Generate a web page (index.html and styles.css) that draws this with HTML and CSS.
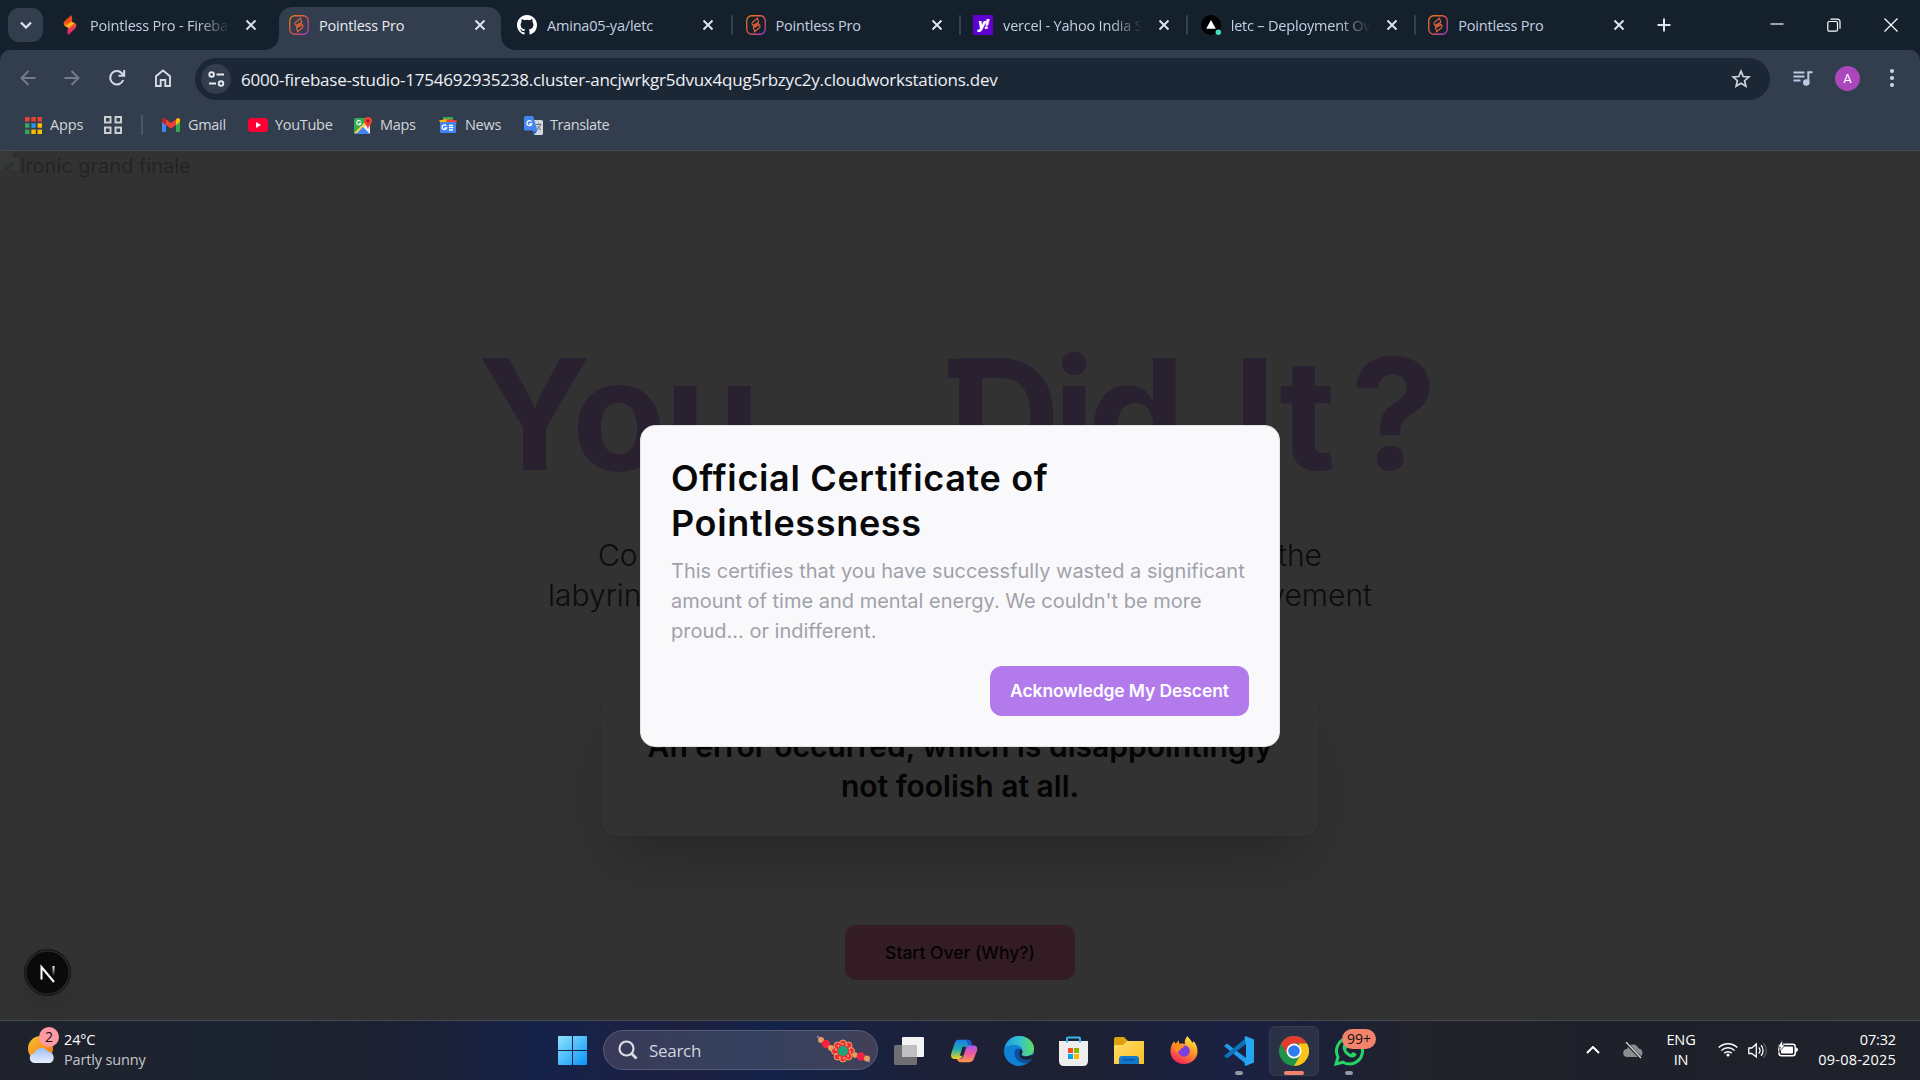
FILE: index.html
```html
<!DOCTYPE html>
<html lang="en">
<head>
<meta charset="utf-8">
<title>Pointless Pro</title>
<link rel="stylesheet" href="styles.css">
</head>
<body>
<svg class="defs" width="0" height="0">
  <defs>
    <linearGradient id="ring" x1="0" y1="0" x2="1" y2="1"><stop offset="0" stop-color="#e8820c"/><stop offset=".5" stop-color="#e2504a"/><stop offset="1" stop-color="#a63cc0"/></linearGradient>
    <linearGradient id="flame" x1="0" y1="0" x2="0" y2="1"><stop offset="0" stop-color="#e8400f"/><stop offset=".6" stop-color="#f4511e"/><stop offset="1" stop-color="#ffb01a"/></linearGradient>
    <linearGradient id="flame2" x1="0" y1="0" x2="0" y2="1"><stop offset="0" stop-color="#ffb01a"/><stop offset=".3" stop-color="#f0443a"/><stop offset="1" stop-color="#e5189a"/></linearGradient>
    <linearGradient id="win" x1="0" y1="0" x2="1" y2="1"><stop offset="0" stop-color="#8fe3ff"/><stop offset="1" stop-color="#0a93f5"/></linearGradient>
    <linearGradient id="edgeA" x1="0" y1="0" x2="1" y2="0"><stop offset="0" stop-color="#1b9de2"/><stop offset=".5" stop-color="#35c1cf"/><stop offset="1" stop-color="#62dc5b"/></linearGradient>
    <linearGradient id="copA" x1="0" y1="0" x2="0" y2="1"><stop offset="0" stop-color="#1d7be8"/><stop offset=".5" stop-color="#1fb0b0"/><stop offset="1" stop-color="#f3d21c"/></linearGradient>
    <linearGradient id="copB" x1="0" y1="0" x2="0" y2="1"><stop offset="0" stop-color="#a955f0"/><stop offset=".5" stop-color="#ee5a9c"/><stop offset="1" stop-color="#ff9a4a"/></linearGradient>
    <linearGradient id="folder" x1="0" y1="0" x2="1" y2="1"><stop offset="0" stop-color="#ffdd6b"/><stop offset="1" stop-color="#fbbf24"/></linearGradient>
    <linearGradient id="fox" x1=".8" y1="0" x2=".3" y2="1"><stop offset="0" stop-color="#fff04a"/><stop offset=".45" stop-color="#ff9a22"/><stop offset="1" stop-color="#f5205e"/></linearGradient>
    <linearGradient id="sun" x1="0" y1="0" x2="1" y2="1"><stop offset="0" stop-color="#fbc331"/><stop offset="1" stop-color="#f06d10"/></linearGradient>
    <linearGradient id="cloud" x1="0" y1="0" x2="0" y2="1"><stop offset="0" stop-color="#9dbef5"/><stop offset="1" stop-color="#e6effe"/></linearGradient>
    <linearGradient id="nfade" x1="0" y1="0" x2="0" y2="1"><stop offset="0" stop-color="#fff"/><stop offset="1" stop-color="#fff" stop-opacity="0"/></linearGradient>
    <symbol id="x" viewBox="0 0 12 12"><path d="M1.5 1.5l9 9M10.5 1.5l-9 9" stroke="currentColor" stroke-width="1.9" fill="none"/></symbol>
    <symbol id="studio" viewBox="0 0 20 20"><rect x=".75" y=".75" width="18.5" height="18.5" rx="5" fill="none" stroke="url(#ring)" stroke-width="1.3"/><path d="M11.5 3.2L6.6 7.2c-1 .9-.7 2.3.3 3l1.6 1.1 3.5-3c1-1 .7-2.300-.1-3.500zM8.500 16.800l4.900-4c1-.9.8-2.200-.2-3l-1.500-1.100-3.700 3c-1 1-.6 2.500.5 3.400zM7 10.200l5-2.400M8 12.500l5-2.600" fill="none" stroke="#e2603a" stroke-width="1.100"/></symbol>
  </defs>
</svg>

<header class="chrome">
  <div class="tabs">
    <div class="tabs-menu"><svg width="12" height="8" viewBox="0 0 12 8"><path d="M1 1.500l5 5 5-5" fill="none" stroke="#dfe5ee" stroke-width="2.200"/></svg></div>
    <div class="tab tab-first"><svg class="fav" viewBox="0 0 20 20"><path d="M11.300 0L5 5.800C2.800 8 3.500 10.500 5.700 11.400l3.500 1.600 1.600-4.500C12.700 6 12.700 3 11.300 0z" fill="url(#flame)"/><path d="M8.200 20l6.500-6c2.600-2.400 1.900-5-.3-5.900L11 6.800 9.500 11.500C7 14 6.800 17 8.200 20z" fill="url(#flame2)"/><path d="M5.700 11.400L11 6.800l3.400 1.300-5.200 4.900z" fill="#ffb51a"/></svg><span class="tab-title">Pointless Pro - Firebase</span><svg class="tab-close"><use href="#x"/></svg></div>
    <div class="tab tab-active"><svg class="fav"><use href="#studio"/></svg><span class="tab-title">Pointless Pro</span><svg class="tab-close"><use href="#x"/></svg></div>
    <div class="tab"><svg class="fav" viewBox="0 0 16 16"><path fill="#fff" d="M8 0C3.580 0 0 3.580 0 8c0 3.540 2.290 6.530 5.470 7.590.4.070.55-.17.55-.38v-1.490c-2.230.48-2.690-.94-2.690-.94-.36-.93-.89-1.170-.89-1.170-.73-.5.050-.49.050-.49.800.060 1.230.83 1.230.83.72 1.220 1.870.87 2.330.66.070-.52.280-.87.5-1.070-1.780-.2-3.640-.89-3.640-3.950 0-.87.310-1.590.82-2.150-.08-.2-.36-1.020.080-2.120 0 0 .67-.21 2.200.82a7.600 7.600 0 0 1 4 0c1.530-1.040 2.200-.82 2.200-.82.440 1.100.160 1.920.080 2.120.51.560.82 1.270.82 2.150 0 3.070-1.870 3.750-3.650 3.950.29.250.54.730.54 1.480v2.200c0 .21.150.46.550.38A8 8 0 0 0 16 8c0-4.420-3.580-8-8-8z"/></svg><span class="tab-title">Amina05-ya/letc</span><svg class="tab-close"><use href="#x"/></svg></div>
    <div class="tab tab-sep"><svg class="fav"><use href="#studio"/></svg><span class="tab-title">Pointless Pro</span><svg class="tab-close"><use href="#x"/></svg></div>
    <div class="tab tab-sep"><span class="fav yahoo">y!</span><span class="tab-title fade">vercel - Yahoo India Search</span><svg class="tab-close"><use href="#x"/></svg></div>
    <div class="tab tab-sep"><svg class="fav" viewBox="0 0 20 20"><circle cx="10" cy="10" r="10"/><path d="M10 5l4.800 8.800H5.200z" fill="#fff"/><circle cx="17.300" cy="17.300" r="2.700" fill="#45dec4"/></svg><span class="tab-title fade">letc – Deployment Overview</span><svg class="tab-close"><use href="#x"/></svg></div>
    <div class="tab tab-sep"><svg class="fav"><use href="#studio"/></svg><span class="tab-title">Pointless Pro</span><svg class="tab-close"><use href="#x"/></svg></div>
    <div class="new-tab"><svg width="14" height="14" viewBox="0 0 14 14"><path d="M7 .5v13M.5 7h13" stroke="#dbe3ef" stroke-width="2"/></svg></div>
    <div class="window-buttons">
      <svg width="14" height="14" viewBox="0 0 14 14"><path d="M.5 6h13" stroke="#fff" stroke-width="1.200"/></svg>
      <svg width="14" height="14" viewBox="0 0 14 14" fill="none" stroke="#fff" stroke-width="1.200"><rect x=".8" y="3.500" width="9.700" height="9.700" rx="1.500"/><path d="M3.500 1.200h7a2.500 2.500 0 0 1 2.500 2.500v7"/></svg>
      <svg width="14" height="14" viewBox="0 0 14 14"><path d="M.5.5l13 13M13.500.5l-13 13" stroke="#fff" stroke-width="1.200"/></svg>
    </div>
  </div>
  <div class="toolbar">
    <div class="nav">
      <svg width="16" height="16" viewBox="0 0 16 16" stroke="#727c8a" fill="none" stroke-width="1.900"><path d="M15.500 8H2M8.500 1L1.500 8l7 7"/></svg>
      <svg width="16" height="16" viewBox="0 0 16 16" stroke="#727c8a" fill="none" stroke-width="1.900"><path d="M.5 8H14M7.500 1l7 7-7 7"/></svg>
      <svg width="18" height="18" viewBox="0 0 18 18" stroke="#d3dbe6" fill="none" stroke-width="2"><path d="M15.200 11a6.700 6.700 0 1 1-1.400-6.800L16 6.500M16.200 1v5.700h-5.700"/></svg>
      <svg width="18" height="18" viewBox="0 0 18 18" stroke="#d3dbe6" fill="none" stroke-width="1.900"><path d="M2 7.200L9 1.500l7 5.700V17h-4.700v-6H6.700v6H2z"/></svg>
    </div>
    <div class="omnibox">
      <div class="site-info"><svg width="17" height="16" viewBox="0 0 17 16" fill="none" stroke="#e6eaf0" stroke-width="1.900"><circle cx="3.600" cy="3.500" r="2.300"/><path d="M8.500 3.500H16M1 12.500h7"/><circle cx="13" cy="12.500" r="2.300"/></svg></div>
      <span class="url">6000-firebase-studio-1754692935238.cluster-ancjwrkgr5dvux4qug5rbzyc2y.cloudworkstations.dev</span>
      <svg class="star" width="20" height="20" viewBox="0 0 20 20"><path d="M10 2.200l2.200 5.300 5.700.5-4.300 3.700 1.300 5.600-4.900-3-4.900 3 1.300-5.600L2.100 8l5.700-.5z" fill="none" stroke="#d0d3d9" stroke-width="1.700"/></svg>
    </div>
    <div class="tools">
      <svg width="20" height="16" viewBox="0 0 20 16" fill="none" stroke="#bccbe3" stroke-width="2"><path d="M.5 2.500h11M.5 6.500h11M.5 10.500h7M15.300 12V2.200h4.200"/><circle cx="13.300" cy="12.500" r="2.300" fill="#bccbe3"/></svg>
      <span class="avatar">A</span>
      <svg width="6" height="20" viewBox="0 0 6 20" fill="#c7d4ea"><circle cx="3" cy="3" r="2.100"/><circle cx="3" cy="10" r="2.100"/><circle cx="3" cy="17" r="2.100"/></svg>
    </div>
  </div>
  <nav class="bookmarks">
    <span class="bm bm-apps"><svg width="17" height="17" viewBox="0 0 17 17"><path d="M0 0h4.500v4.500H0zM6.300 0h4.500v4.500H6.300zM12.500 0H17v4.500h-4.500z" fill="#ea4335"/><path d="M0 6.300h4.500v4.500H0zM0 12.500h4.500V17H0z" fill="#34a853"/><path d="M6.300 6.300h4.500v4.500H6.300z" fill="#2a94f4"/><path d="M12.500 6.300H17v4.500h-4.500zM6.300 12.500h4.500V17H6.300zM12.500 12.500H17V17h-4.500z" fill="#fbbc04"/></svg><span>Apps</span></span>
    <svg class="grid-icon" width="18" height="18" viewBox="0 0 18 18" fill="none" stroke="#ccced2" stroke-width="2"><path d="M1 1h5.500v5.500H1zM11.500 1H17v5.500h-5.500zM1 11.500h5.500V17H1zM11.500 11.500H17V17h-5.500z"/></svg>
    <i class="divider"></i>
    <span class="bm bm-gmail"><svg width="18" height="14" viewBox="0 0 18 14"><path d="M0 2v10.500Q0 14 1.500 14H4V5.500z" fill="#4285f4"/><path d="M18 2v10.500q0 1.500-1.500 1.500H14V5.500z" fill="#34a853"/><path d="M14 1.200L15.500.2C16.800-.5 18 .6 18 2v2l-4 3z" fill="#fbbc04"/><path d="M4 1.200L2.500.2C1.200-.5 0 .6 0 2v2l4 3z" fill="#c5221f"/><path d="M4 1.200V7l5 3.600L14 7V1.200L9 5z" fill="#ea4335"/></svg><span>Gmail</span></span>
    <span class="bm bm-yt"><svg width="20" height="14" viewBox="0 0 20 14"><rect width="20" height="14" rx="3.500" fill="#f03"/><path d="M8 4l5 3-5 3z" fill="#fff"/></svg><span>YouTube</span></span>
    <span class="bm bm-maps"><svg width="18" height="19" viewBox="0 0 18 19"><rect y="2" width="16" height="16" rx="1.500" fill="#34a853"/><path d="M0 17L15 2l1 1v14z" fill="#fbcf3d"/><path d="M2 18L16 5v13z" fill="#e8eaed"/><path d="M2 18l7-7 7 7z" fill="#4285f4"/><path d="M14 13c-.5-3-4-5-4-8a4 4 0 0 1 8 0c0 3-3.500 5-4 8z" fill="#ea4335"/><circle cx="14" cy="5" r="1.400" fill="#8c1a10"/><path d="M6.800 5.500A2.200 2.200 0 1 0 7 7.300H5" stroke="#fff" stroke-width="1.100" fill="none"/></svg><span>Maps</span></span>
    <span class="bm bm-news"><svg width="18" height="16" viewBox="0 0 18 16"><path d="M4 0h10v6H4z" fill="#34a853"/><path d="M0 3.500l10-2 1 5H2z" fill="#fbbc04"/><path d="M8 2l10 1.500-1 4H7z" fill="#ea4335"/><path d="M1 6.200Q1 5 2.200 5h13.600Q17 5 17 6.200V15q0 1-1 1H2q-1 0-1-1z" fill="#4285f4"/><path d="M7.300 8.800A2.300 2.300 0 1 0 7.600 11H5.500M10 8.500h4M10 10.700h4.500M10 13h4" stroke="#fff" stroke-width="1.300" fill="none"/></svg><span>News</span></span>
    <span class="bm bm-tr"><svg width="19" height="19" viewBox="0 0 19 19"><path d="M7 4h10.500q1.500 0 1.500 1.500v12q0 1.500-1.500 1.500H10z" fill="#d3d6da"/><path d="M0 1.500Q0 0 1.500 0H9l4.500 14.500H1.500Q0 14.500 0 13z" fill="#4285f4"/><path d="M10 19l3.500-4.500H9z" fill="#1967d2"/><path d="M7.500 5.800A2.500 2.500 0 1 0 7.800 8H5.200" stroke="#fff" stroke-width="1.300" fill="none"/><path d="M12 8.500h5.500M14.800 7v1.500M16.500 8.500c-.5 2.500-2 4-3.500 5M13.500 10c.8 1.800 2 3 3.500 4" stroke="#66727f" fill="none"/></svg><span>Translate</span></span>
  </nav>
</header>

<main class="page">
  <div class="broken"><svg width="20" height="20" viewBox="0 0 20 20"><path d="M0 0h13l6 6v13H0z" fill="#383838"/><path d="M13 0v6h6z" fill="#2d2d2d"/><path d="M3 19L12 10l4 2-7 7z" fill="#29352b"/></svg><span>Ironic grand finale</span></div>
  <h1 class="headline"><span class="w-you">You...</span><span class="w-did">Did</span><span class="w-it">I<span class="w-t">t</span>?</span></h1>
  <div class="sub">
    <p class="sub-1"><span>Co</span><span>the</span></p>
    <p class="sub-2"><span>labyrin</span><span>vement</span></p>
  </div>
  <section class="card">An error occurred, which is disappointingly<br>not foolish at all.</section>
  <button class="restart">Start Over (Why?)</button>
  <div class="next-badge"><svg width="20" height="20" viewBox="0 0 20 20" fill="none"><path d="M3.500 16.500V4L16 19" stroke="#fff" stroke-width="2"/><path d="M14.500 3h2v10h-2z" fill="url(#nfade)"/></svg></div>
  <div class="dialog" role="dialog">
    <h2>Official Certificate of<br>Pointlessness</h2>
    <p>This certifies that you have successfully wasted a significant<br>amount of time and mental energy. We couldn't be more<br>proud... or indifferent.</p>
    <div class="actions"><button class="ack">Acknowledge My Descent</button></div>
  </div>
</main>

<footer class="taskbar">
  <div class="weather">
    <div class="weather-icon"><svg width="28" height="28" viewBox="0 0 28 28"><circle cx="12.500" cy="12.500" r="12.500" fill="url(#sun)"/><path d="M7 27a5 5 0 0 1-.5-10A7.500 7.500 0 0 1 20 15.500 6 6 0 0 1 22 27z" fill="url(#cloud)"/></svg><span class="weather-badge">2</span></div>
    <div class="weather-text"><span>24°C</span><span class="dim">Partly sunny</span></div>
  </div>
  <div class="dock">
    <div class="slot slot-win"><svg width="29" height="29" viewBox="0 0 29 29"><path d="M1 0h13v14H0V1q0-1 1-1zM15 0h13q1 0 1 1v13H15zM0 15h14v14H1q-1 0-1-1zM15 15h14v13q0 1-1 1H15z" fill="url(#win)"/></svg></div>
    <div class="search"><svg width="20" height="20" viewBox="0 0 20 20" fill="none" stroke="#dadde6"><circle cx="8.500" cy="8.500" r="7" stroke-width="2.200"/><path d="M13.500 13.500l5 5" stroke-width="2.800"/></svg><span>Search</span>
      <svg class="rakhi" width="56" height="30" viewBox="0 0 56 30"><path d="M1 1l15 12M40 19l14 8" stroke="#8b6cc8" stroke-width="2"/><circle cx="5" cy="5" r="3" fill="#e3a061"/><circle cx="10" cy="9" r="4.200" fill="#ee2445"/><circle cx="15" cy="13" r="3" fill="#e3a061"/><circle cx="39" cy="20" r="2.800" fill="#e3a061"/><circle cx="45" cy="21.500" r="4.200" fill="#ee2445"/><circle cx="51" cy="23.500" r="3" fill="#e3a061"/><g fill="#e8303f" stroke="#f0a35b" stroke-width="1"><circle cx="27" cy="8.500" r="3.500"/><circle cx="32.500" cy="10.500" r="3.500"/><circle cx="35" cy="16" r="3.500"/><circle cx="32.500" cy="21.500" r="3.500"/><circle cx="27" cy="23.500" r="3.500"/><circle cx="21.500" cy="21.500" r="3.500"/><circle cx="19" cy="16" r="3.500"/><circle cx="21.500" cy="10.500" r="3.500"/></g><circle cx="27" cy="16" r="7.500" fill="#e8303f"/><circle cx="27" cy="16" r="7" fill="none" stroke="#ffc95a" stroke-width="1.500" stroke-dasharray="1.500 3"/><circle cx="27" cy="16" r="5" fill="#1da67a"/></svg>
    </div>
    <div class="slot slot-tv"><svg width="30" height="28" viewBox="0 0 30 28"><rect y="8" width="23" height="20" rx="1.500" fill="#6f6f73"/><rect x="8" width="22" height="20" rx="1" fill="#f3f3f3"/><path d="M8 8h15v12H8z" fill="#bfbfc1"/></svg></div>
    <div class="slot slot-copilot"><svg width="28" height="26" viewBox="0 0 30 28"><path d="M9 2h10c2.500 0 3.300 1.500 4 3.500L24 9h-4c-2.500 0-3.500 1.500-4.500 4l-2 6c-1 2.500-2 3.500-4.500 3.500H4.500C1 22.500.5 19.500 1.500 16L5 5.500C5.800 3.200 7 2 9 2z" fill="url(#copA)"/><path d="M21 26H11.500c-2.500 0-3.500-1.500-4.200-3.500h3c2.500 0 3.500-1.500 4.300-4l2-6c1-2.700 2-4.500 4.500-4.500h4.500c3.500 0 4.300 2.500 3.300 6l-3.500 9C24.500 25 23 26 21 26z" fill="url(#copB)"/><path d="M17 2h3c2 0 3 2 4 6h-4z" fill="#2257c8"/><path d="M13.500 9.500h3.500l-3.500 9.500h-3z" fill="#1e2035"/></svg></div>
    <div class="slot"><svg width="30" height="30" viewBox="0 0 30 30"><circle cx="15" cy="15" r="15" fill="#0f82d8"/><path d="M1 11C3 4 9 0 15 0c9 0 15 6 15 12.500 0 5-3.500 7.500-8 7.500-3 0-5-1-4.500-2.500C20 14 17 9 11 9 6 9 2 11 1 11z" fill="url(#edgeA)"/><path d="M11 14c-2 7 3 14 12 13.500 2-1 4-3 5-5-5 3-12 1-12-3.500 0-2 .5-3 1.500-4.500-1.500-2-5.500-2.500-6.500-.5z" fill="#0c4f9e"/><path d="M16 13c2.500.5 3.500 3 1.500 5.500.5 1.500 3 2.500 6.500 1.500l6-1.500v3l-2 1c-6 3-12.500 1-12.500-4 0-2 .3-3.500.5-5.500z" fill="#1d2033"/></svg></div>
    <div class="slot slot-store"><svg width="29" height="30" viewBox="0 0 29 30"><path d="M0 5h29v20q0 5-5 5H5q-5 0-5-5z" fill="#eeeeef"/><path d="M8 6.500V2.500q0-1 1-1h11q1 0 1 1v4" fill="none" stroke="#35b8ee" stroke-width="2"/><path d="M9 12h5v5H9z" fill="#f25022"/><path d="M15 12h5v5h-5z" fill="#7fba00"/><path d="M9 18h5v5H9z" fill="#00a4ef"/><path d="M15 18h5v5h-5z" fill="#ffb900"/></svg></div>
    <div class="slot"><svg width="30" height="28" viewBox="0 0 30 28"><path d="M0 2q0-2 2-2h8l4 4h14v8H0z" fill="#e0a20c"/><path d="M0 8h9l4-4h17v23H0z" fill="url(#folder)"/><path d="M5 27v-5q0-3 3-3h14q3 0 3 3v5z" fill="#1278cc"/><path d="M9 22.800h12" stroke="#0b559b" stroke-width="1.500"/></svg></div>
    <div class="slot slot-fox"><svg width="28" height="29" viewBox="0 0 29 30"><path d="M18 0c1 2 4 4 5 7l1.500-1.500C27 8 28.500 12 28.500 16c0 7-6 13-14 13S.5 23 .5 16C.5 11 2 9 4 5.500L6 8l3-3.500.5 3.500c3-.5 5-.5 6 .5-1-3 .5-6 2.500-8.500z" fill="url(#fox)"/><circle cx="14.500" cy="15.500" r="6" fill="#7b3fe0"/><path d="M4 9c5-2 8 0 11 1.500-1 2-4 1.500-4 3.500-1 2-4 2-5 3z" fill="#ff8a1e"/></svg></div>
    <div class="slot open"><svg width="30" height="30" viewBox="0 0 30 30"><path d="M0 10l3-2.500 19 14.500v6z" fill="#1f9cf0"/><path d="M0 20l3 2.500L22 8V2z" fill="#0a73bb"/><path d="M21.500 0L30 3.500v23L21.500 30l-1-1.500L22 21V9l-1.500-7.500z" fill="#27a5f2"/></svg></div>
    <div class="slot current"><svg width="30" height="30" viewBox="0 0 30 30"><circle cx="15" cy="15" r="15" fill="#1f9347"/><path d="M2 7.500A15 15 0 0 1 28 7.500H15L8.500 18.800z" fill="#e53b2e"/><path d="M28 7.500A15 15 0 0 1 15 30l6.500-11.300L20 7.500z" fill="#fcc419"/><circle cx="15" cy="15" r="7.500" fill="#fff"/><circle cx="15" cy="15" r="5.800" fill="#2f7bed"/></svg></div>
    <div class="slot open wa"><svg width="30" height="30" viewBox="0 0 30 30"><path d="M2 28l2-7A13 13 0 1 1 9 26.200z" fill="none" stroke="#25d366" stroke-width="3"/><path d="M9 9c1-2 3-2 3.500 0l1 2.500-1.500 2c1 2 3 3.500 5 4.500l2-2 3 1.500c1.500 1-1 4-3.500 4C13 21.500 7 14 9 9z" fill="#25d366"/></svg><span class="badge">99+</span></div>
  </div>
  <div class="tray">
    <svg class="chev" width="14" height="8" viewBox="0 0 14 8"><path d="M1 7l6-6 6 6" fill="none" stroke="#fff" stroke-width="2"/></svg>
    <svg class="cloud" width="20" height="17" viewBox="0 0 20 17"><path d="M4.500 15a4 4 0 0 1-.5-8A6 6 0 0 1 15.500 6.500 4.300 4.300 0 0 1 16 15z" fill="#8b8d91"/><path d="M2 0l16 16" stroke="#1f222a" stroke-width="3"/><path d="M3 0l15 16" stroke="#dcdcdc" stroke-width="1.300"/></svg>
    <div class="lang"><span>ENG</span><span>IN</span></div>
    <svg class="wifi" width="20" height="15" viewBox="0 0 20 15" fill="none" stroke="#fff" stroke-width="1.500"><path d="M.7 5.500a13.200 13.200 0 0 1 18.600 0M3.500 8.500a9.200 9.200 0 0 1 13 0M6.200 11.200a5.500 5.500 0 0 1 7.600 0"/><circle cx="10" cy="13" r="1.600" fill="#fff" stroke="none"/></svg>
    <svg class="vol" width="20" height="17" viewBox="0 0 20 17" fill="none" stroke="#fff" stroke-width="1.300"><path d="M.8 6h3l4.500-4v13L3.800 11.500h-3zM10.700 5.500a4 4 0 0 1 0 6M13 3.300a7.500 7.500 0 0 1 0 10.400"/><path d="M15.500 1.300a10.500 10.500 0 0 1 0 14.400" stroke="#585b61"/></svg>
    <svg class="batt" width="20" height="17" viewBox="0 0 20 17"><rect x="1" y="4.200" width="16.200" height="11.500" rx="2.500" fill="none" stroke="#fff" stroke-width="1.500"/><rect x="3" y="6.500" width="12" height="7" rx="1" fill="#fff"/><path d="M17.500 7.500q2.500 0 2.500 2.300t-2.500 2.300z" fill="#fff"/><path d="M4.500-.3L0 7h2.300L1 12.500 7 5H4.500z" fill="#fff" stroke="#1f222a" stroke-width=".7"/></svg>
    <div class="clock"><span>07:32</span><span class="date">09-08-2025</span></div>
  </div>
</footer>
</body>
</html>
```

FILE: styles.css
```css
* { box-sizing: border-box; }
body {
  margin: 0;
  width: 1920px;
  height: 1080px;
  overflow: hidden;
  display: flex;
  flex-direction: column;
  background: #323232;
  font-family: "Open Sans", "Noto Sans", sans-serif;
}
svg { display: block; flex: none; }
p, h1, h2 { margin: 0; }
button { border: 0; padding: 0; font: inherit; }
.defs { position: absolute; }

/* browser frame */
.chrome { height: 151px; background: #15202d; border-bottom: 1px solid #454c52; flex: none; }
.tabs { height: 50px; display: flex; align-items: stretch; }
.tabs-menu { width: 35px; height: 34px; margin: 8px 0 0 8px; border-radius: 11px; background: #323d4d; display: grid; place-items: center; flex: none; }
.tab { position: relative; width: 227.6px; flex: none; display: flex; align-items: center; padding-left: 14.500px; color: #c3cfe0; }
.tab-first { width: 236px; padding-left: 17px; }
.tab-active { width: 222px; margin-top: 7px; padding: 0 0 7px 10px; background: #323d4d; border-radius: 13px 13px 0 0; color: #e8ecf2; }
.tab-active::before, .tab-active::after { content: ""; position: absolute; bottom: 0; width: 14px; height: 14px; }
.tab-active::before { left: -14px; background: radial-gradient(circle at 0 0, transparent 13.500px, #323d4d 14px); }
.tab-active::after { right: -14px; background: radial-gradient(circle at 100% 0, transparent 13.500px, #323d4d 14px); }
.tab-active + .tab { width: 230px; padding-left: 16px; }
.tab-sep::before { content: ""; position: absolute; left: 0; top: 15px; width: 2px; height: 20px; background: #34404f; border-radius: 1px; }
.fav { width: 20px; height: 20px; flex: none; margin-right: 10px; }
.tab-title { width: 142px; height: 22px; line-height: 22px; margin-top: 2px; font-size: 14.500px; letter-spacing: -.2px; white-space: nowrap; overflow: hidden; }
.tab-first .tab-title, .fade { -webkit-mask-image: linear-gradient(90deg, #000 108px, transparent 140px); mask-image: linear-gradient(90deg, #000 108px, transparent 140px); }
.tab-close { width: 12px; height: 12px; margin-left: 13px; color: #dde5f0; }
.yahoo { background: #6001d2; color: #fff; font: italic 800 14px/18px "Open Sans", sans-serif; text-align: center; letter-spacing: -1px; }
.new-tab { width: 44px; display: grid; place-items: center; padding-left: 2px; }
.window-buttons { margin-left: auto; display: flex; align-items: center; gap: 43px; padding-right: 22px; }

.toolbar { height: 50px; background: #323d4d; border-radius: 10px 10px 0 0; display: flex; align-items: flex-start; padding-top: 8px; }
.nav { width: 195px; height: 42px; display: flex; align-items: center; padding-left: 20px; gap: 28px; flex: none; margin-top: -1px; }
.omnibox { width: 1575px; height: 42px; border-radius: 21px; background: #1c2736; display: flex; align-items: center; padding-left: 6px; flex: none; }
.site-info { width: 30px; height: 30px; border-radius: 50%; background: #323d4d; display: grid; place-items: center; }
.url { margin-left: 10px; color: #eef0f4; font-size: 17px; letter-spacing: -.22px; white-space: nowrap; }
.star { margin-left: auto; margin-right: 19px; }
.tools { display: flex; align-items: center; height: 42px; padding-left: 23px; margin-top: -1px; }
.avatar { width: 25px; height: 25px; border-radius: 50%; background: #ab47bc; color: #fff; font: 13px/25px Roboto, sans-serif; text-align: center; margin: 0 29px 0 22px; }
.bookmarks { height: 50px; background: #323d4d; display: flex; align-items: center; padding-left: 25px; color: #d3d6db; font-size: 14.500px; }
.bm { display: flex; align-items: center; gap: 8px; letter-spacing: -.3px; flex: none; }
.bm > span { margin-top: -2px; }
.bm-apps { width: 79px; letter-spacing: -.1px; }
.divider { width: 2px; height: 20px; background: #4c5766; margin: 0 19px 0 19px; }
.bm-gmail { width: 86px; }
.bm-yt { width: 106px; gap: 7px; }
.bm-maps { width: 85px; gap: 8px; }
.bm-news { width: 85px; }
.bm-tr { gap: 7px; letter-spacing: -.4px; }

/* page content */
.page { position: relative; height: 869px; flex: none; background: #323232; display: flex; flex-direction: column; align-items: center; font-family: Inter, sans-serif; }
.broken { align-self: flex-start; height: 30px; display: flex; font-size: 20px; line-height: 30px; color: #242424; letter-spacing: 0; }
.headline { width: 960px; height: 200px; margin-top: 133px; display: flex; font-weight: 700; font-size: 154px; line-height: 200px; color: #2a2130; white-space: nowrap; }
.w-you { width: 461px; margin-left: -2px; letter-spacing: -2px; }
.w-did { position: relative; width: 294px; padding-left: 10px; letter-spacing: -7px; }
.w-did::before { content: ""; position: absolute; left: 9px; top: 45px; width: 20px; height: 19px; background: #2a2130; }
.w-it { letter-spacing: 3px; }
.w-t { letter-spacing: 15px; }
.sub { width: 824px; margin-top: 21px; font-weight: 300; font-size: 30px; line-height: 40px; color: #0c0c0c; }
.sub p { display: flex; justify-content: space-between; }
.sub .sub-1 { width: 724px; margin: 0 auto; }
.card { width: 718px; height: 141px; margin-top: 80px; padding-top: 31px; border-radius: 15px; background: #323232; box-shadow: 0 31px 62px -15px rgba(0,0,0,.25), 0 0 0 1px #303030; font-weight: 600; font-size: 30px; line-height: 40px; text-align: center; color: #040404; white-space: nowrap; }
.restart { width: 230px; height: 55px; margin-top: 89px; border-radius: 12px; background: #331c23; color: #030303; font-weight: 500; font-size: 17.500px; }
.next-badge { position: absolute; left: 24px; top: 798px; width: 47px; height: 47px; border-radius: 50%; background: #0a0a0a; border: 1.500px solid #151515; box-shadow: inset 0 0 0 1.500px #2b2b2b, 0 10px 20px rgba(0,0,0,.08); display: grid; place-items: center; }
.dialog { position: absolute; left: 640px; top: 274px; width: 640px; height: 322px; border-radius: 15px; background: #f9f9fb; padding: 30px; border: 1px solid #e4e4e7; }
.dialog h2 { font-weight: 600; font-size: 36px; line-height: 45px; letter-spacing: .65px; color: #09090b; white-space: nowrap; }
.dialog p { margin-top: 10px; font-size: 20px; line-height: 30px; color: #a1a1aa; white-space: nowrap; }
.actions { display: flex; justify-content: flex-end; margin-top: 20px; }
.ack { width: 259px; height: 50px; padding-bottom: 1px; border-radius: 12px; background: #b37aec; color: #fff; font-weight: 600; font-size: 17.500px; letter-spacing: -.1px; }

/* taskbar */
.taskbar { height: 60px; flex: none; border-top: 1px solid #44464d; display: flex; justify-content: space-between; position: relative; color: #fff; background: linear-gradient(90deg, #1f222c 0, #1b2431 250px, #1e212e 330px, #1a2138 440px, #16224a 540px, #1d2040 690px, #14234a 770px, #1e2035 960px, #1d2133 1080px, #1a2142 1230px, #1c2038 1320px, #22232a 1430px, #1e212a 1600px, #1f222b 1920px); }
.weather { width: 558px; display: flex; padding-left: 28px; }
.weather-icon { position: relative; width: 36px; padding-top: 15px; }
.weather-badge { position: absolute; left: 11px; top: 6px; width: 20px; height: 20px; border-radius: 50%; background: #ff99a4; color: #111; font-size: 14px; line-height: 20px; text-align: center; }
.weather-text, .lang, .clock { display: flex; flex-direction: column; font-size: 14.500px; line-height: 20px; padding-top: 9px; letter-spacing: -.15px; white-space: nowrap; }
.dim { color: #c5c7cc; }
.dock { display: flex; align-items: center; flex: 1; }
.slot { position: relative; width: 50px; height: 50px; margin-right: 5px; border-radius: 6px; display: grid; place-items: center; flex: none; }
.slot-win { width: 29px; margin-right: 16px; }
.search { width: 275px; height: 40px; margin-top: -1px; border: 1px solid #555c78; border-radius: 20px; background: linear-gradient(90deg, #3a3b58, #34415f 55%, #414058); display: flex; align-items: center; padding-left: 14px; font-size: 17px; color: #d2d4dc; flex: none; letter-spacing: -.3px; }
.search span { margin-left: 11px; }
.rakhi { margin-left: auto; margin-right: 5px; }
.slot-tv { margin-left: 6px; }
.slot-store, .slot-fox { padding-right: 1px; }
.open::after, .current::after { content: ""; position: absolute; bottom: 1px; left: 21px; width: 8px; height: 4px; border-radius: 2px; background: #9297a5; }
.current { background: #2a3046; border: 1px solid #363b50; }
.current::after { left: 14px; width: 20px; bottom: 0; background: #f4836b; }
.badge { position: absolute; left: 18px; top: 3px; width: 34px; height: 20px; border-radius: 10px; background: #f4836b; color: #111; font-size: 14px; line-height: 20px; text-align: center; }
.tray { width: 334px; display: flex; align-items: flex-start; flex: none; }
.tray > svg { margin-top: 21px; }
.tray .chev { margin-top: 25px; }
.tray .batt { margin-top: 19px; }
.cloud { margin-left: 23px; }
.lang { width: 30px; margin-left: 23px; align-items: center; }
.wifi { margin-left: 22px; }
.vol { margin-left: 10px; }
.batt { margin-left: 10px; }
.clock { margin-left: auto; margin-right: 24px; align-items: flex-end; }
.date { letter-spacing: .2px; }
```
